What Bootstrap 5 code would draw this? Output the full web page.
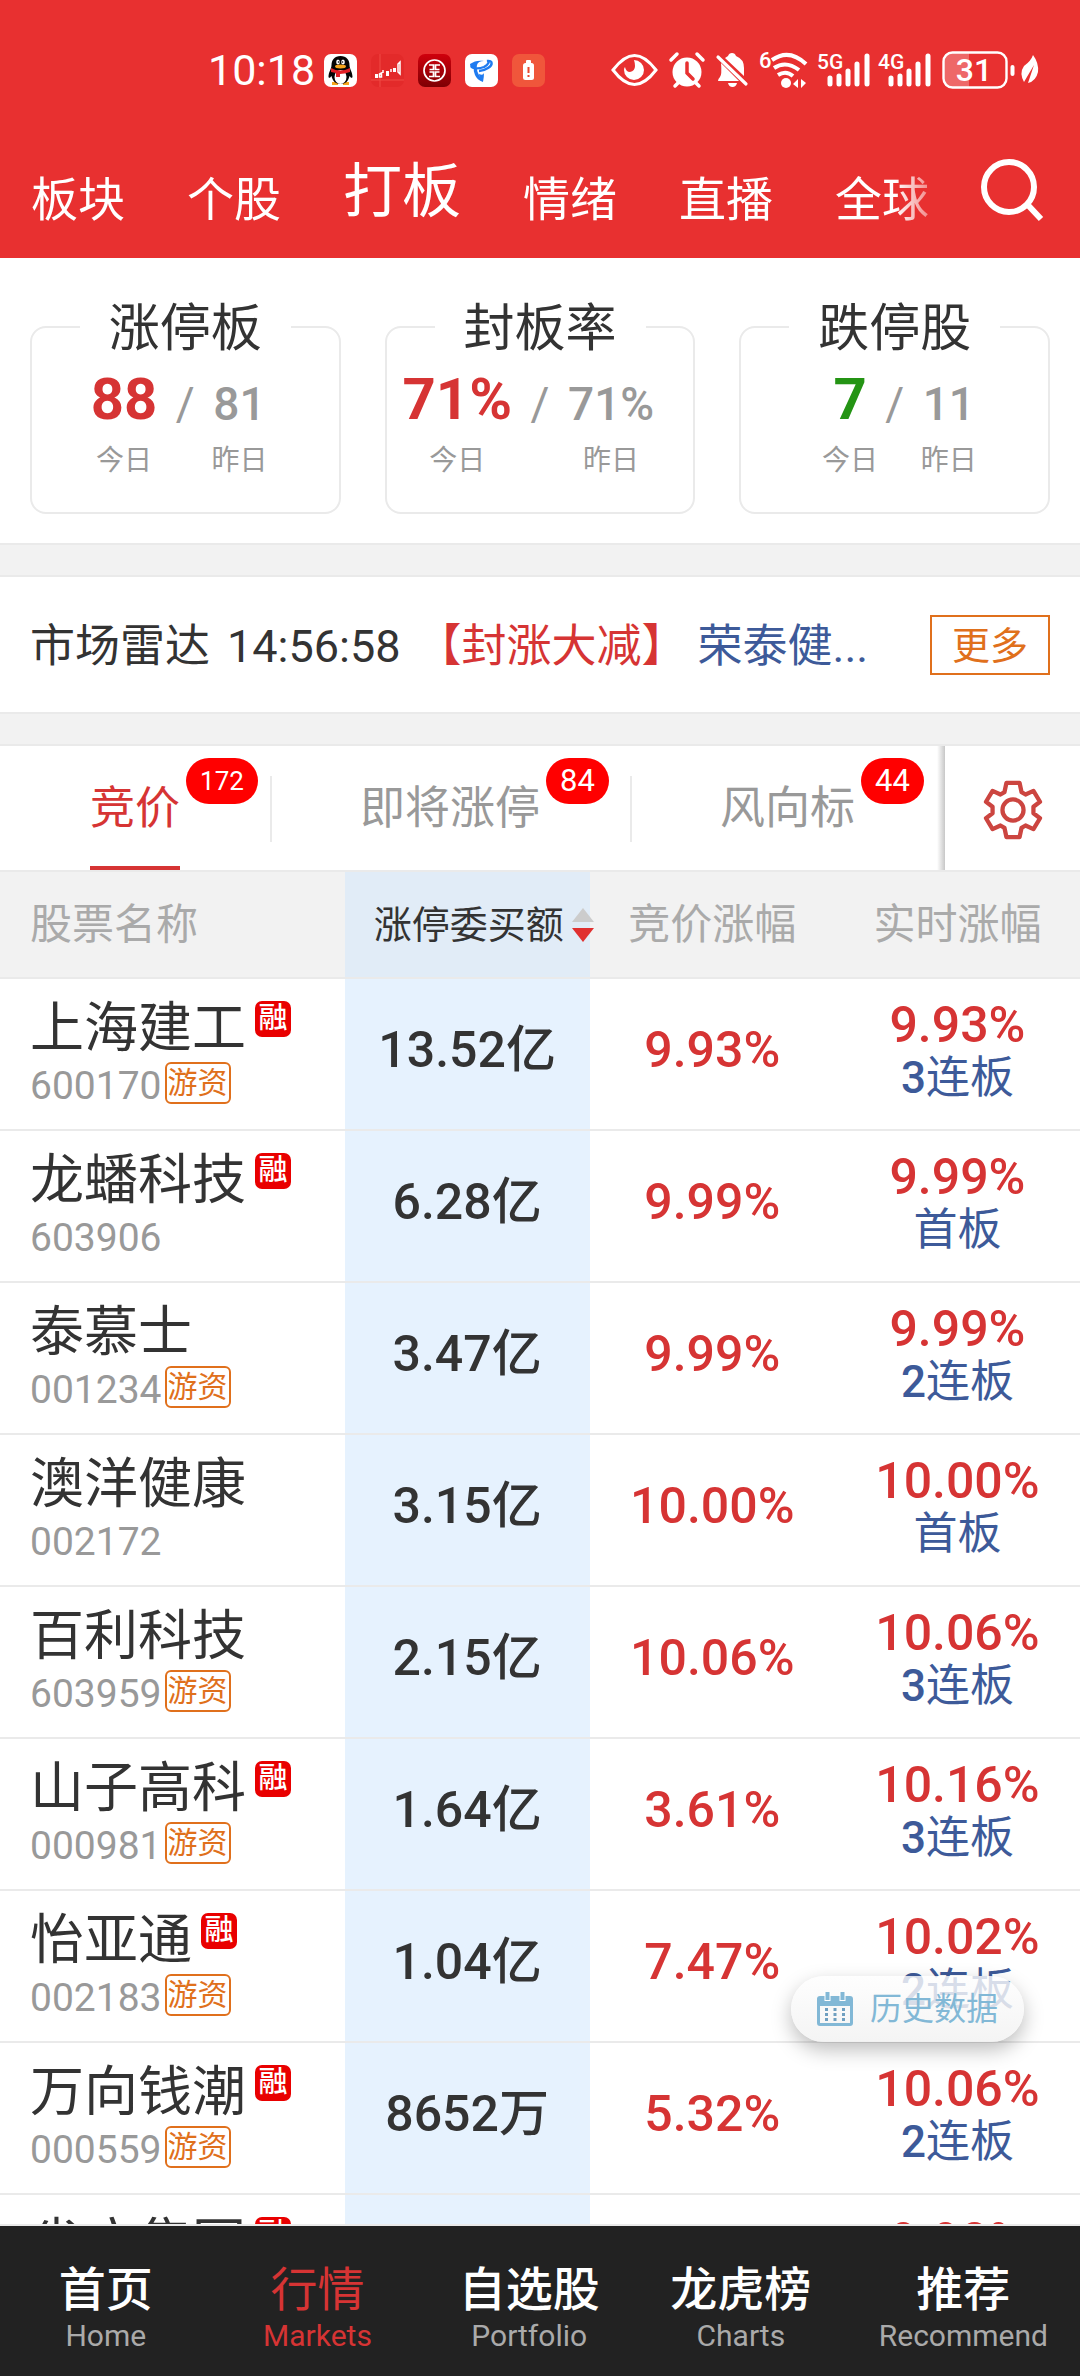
<!DOCTYPE html>
<html lang="zh-CN">
<head>
<meta charset="utf-8">
<meta name="viewport" content="width=device-width, initial-scale=1">
<title>打板</title>
<link href="https://cdn.jsdelivr.net/npm/bootstrap@5.3.0/dist/css/bootstrap.min.css" rel="stylesheet">
<style>
  :root { --app-red: #e83030; --num-red: #d63434; --ink: #333; --muted: #999; --line: #eaeaea; --band: #f2f2f2; --blue: #3d5a99; --orange: #e0701c; }
  body { font-family: Roboto, "Noto Sans CJK SC", sans-serif; color: var(--ink); background: #fff; }
  .app { height: 100vh; min-width: 1000px; }
  svg { display: block; flex: none; overflow: visible; }
  .text-rise { color: var(--num-red); }
  .text-fall { color: #249414; }

  .app-head { background: var(--app-red); color: #fff; height: 258px; }
  .status { height: 60px; margin-top: 40px; padding: 0 40px 0 208px; }
  .clock { font-size: 43px; line-height: 60px; }
  .app-icons { gap: 14px; margin-left: 9px; }
  .sys-icons { gap: 11px; }
  .leaf { margin-left: -7px; }
  .chan { gap: 62px; padding: 0 30px 30px 31px; flex: 1; }
  .chan-fade { -webkit-mask-image: linear-gradient(to right, #000 895px, transparent 955px); mask-image: linear-gradient(to right, #000 895px, transparent 955px); }
  .chan a { color: #fff; text-decoration: none; font-size: 47px; line-height: 56px; white-space: nowrap; }
  .chan a.active { font-size: 59px; line-height: 72px; }
  .plain-btn { border: 0; background: none; padding: 0; color: inherit; }
  .search-btn { padding: 0 36px 36px 0; }

  .stats { padding: 68px 30px 29px; gap: 44px; }
  .stat { flex: 1 1 0; min-width: 0; border: 2px solid var(--line); border-radius: 16px; height: 188px; }
  .stat h2 { font-size: 51px; line-height: 60px; margin: -29px 0 0; padding: 0 29px; background: #fff; font-weight: 400; }
  .stat-nums { width: 100%; margin-top: 8px; }
  .half { flex: 1 1 0; min-width: 0; }
  .num-col { text-align: center; }
  .now { font-size: 58px; line-height: 64px; font-weight: 700; }
  .prev { font-size: 46px; line-height: 64px; font-weight: 500; color: var(--muted); padding-top: 5px; height: 64px; }
  .slash { width: 56px; text-align: center; font-weight: 400; }
  .day { font-size: 28px; line-height: 36px; color: var(--muted); margin: 12px -12px 0; white-space: nowrap; }

  .band { height: 34px; background: var(--band); border-top: 2px solid var(--line); border-bottom: 2px solid var(--line); }
  .radar { height: 135px; padding: 0 30px; font-size: 45px; line-height: 56px; white-space: nowrap; }
  .radar span, .radar time { padding-top: 4px; }
  .radar time { margin-left: 17px; }
  .radar .alert-type { margin-left: 16px; }
  .radar .stock { color: var(--blue); margin-left: 11px; }
  .more-btn { border: 2px solid var(--orange); color: var(--orange); background: #fff; width: 120px; height: 60px; font-size: 38px; line-height: 50px; padding: 2px 0 0; }

  .subtabs { height: 126px; border-bottom: 2px solid var(--line); }
  .subtab { padding: 0 90px; color: var(--muted); font-size: 45px; line-height: 118px; text-decoration: none; white-space: nowrap; position: relative; }
  .subtab + .subtab::before { content: ""; position: absolute; left: 0; top: 30px; height: 66px; width: 2px; background: var(--line); }
  .subtab > span { display: block; height: 124px; padding-top: 4px; border-bottom: 4px solid transparent; position: relative; }
  .subtab.active > span { color: var(--num-red); border-color: var(--num-red); }
  .pill { position: absolute; left: 100%; top: 12px; margin-left: 6px; height: 46px; border-radius: 23px; padding: 0 14px; background: #f00; color: #fff; font-size: 31px; line-height: 46px; font-style: normal; }
  .pill.pill-sm { font-size: 26px; }
  .gear-btn { flex: 1; position: relative; padding-top: 4px; display: flex; align-items: center; justify-content: center; }
  .gear-btn::before { content: ""; position: absolute; left: -8px; top: 0; bottom: 0; width: 8px; background: linear-gradient(to right, rgba(0,0,0,0), rgba(0,0,0,.22)); }

  .quotes { table-layout: fixed; width: 100%; border-collapse: separate; border-spacing: 0; }
  .quotes th { height: 107px; background: var(--band); border-bottom: 2px solid var(--line); font-weight: 400; color: #aaa; font-size: 42px; line-height: 50px; padding: 0; text-align: center; vertical-align: middle; white-space: nowrap; }
  .quotes td { height: 152px; border-bottom: 2px solid var(--line); padding: 0; text-align: center; font-size: 50px; line-height: 50px; font-weight: 500; vertical-align: middle; white-space: nowrap; }
  .quotes .c-name { text-align: left; padding-left: 30px; }
  .quotes th.c-amt { background: #e1ecf7; color: var(--ink); font-size: 38px; }
  .quotes td.c-amt { background: #e6f2fe; padding-bottom: 8px; }
  .quotes td.c-bid { color: var(--num-red); padding-bottom: 8px; }
  .quotes td.c-now { color: var(--num-red); vertical-align: top; padding-top: 21px; }
  .quotes td.c-name { vertical-align: top; padding-top: 20px; font-weight: 400; }
  .sort-mark { margin: 0 -4px 0 8px; position: relative; }
  .sname { font-size: 54px; line-height: 60px; gap: 9px; }
  .margin-tag { width: 36px; height: 36px; border-radius: 7px; background: #e90000; color: #fff; font-size: 29px; line-height: 34px; text-align: center; margin-top: 2px; font-weight: 500; }
  .scode { font-size: 39px; line-height: 44px; color: var(--muted); margin-top: 5px; gap: 3px; }
  .hot-tag { border: 2px solid var(--orange); border-radius: 6px; color: var(--orange); font-size: 30px; line-height: 38px; padding: 0 1px; height: 42px; margin-top: -2px; }
  .boards { font-size: 44px; line-height: 50px; color: var(--blue); margin-top: 3px; font-weight: 400; }
  .boards b { font-weight: 500; }
  .list-wrap { min-height: 0; }

  .history { position: absolute; right: 56px; bottom: 334px; width: 233px; height: 66px; border: 0; border-radius: 33px; gap: 17px; font-size: 32px; line-height: 40px; color: #82b8d6; background: linear-gradient(rgba(254,254,254,.8), rgba(242,242,242,.86)); box-shadow: 0 8px 20px rgba(0,0,0,.26); }
  .foot { height: 152px; background: #222; border-top: 2px solid var(--line); }
  .foot a { flex: 0 0 19.6%; padding-top: 38px; text-align: center; color: #fff; text-decoration: none; font-size: 47px; line-height: 52px; font-weight: 500; }
  .foot a:last-child { flex: 1; }
  .foot span { display: block; font-size: 30px; line-height: 40px; color: #aaa; font-weight: 400; }
  .foot a.active { font-weight: 400; }
  .foot a.active, .foot a.active span { color: var(--num-red); }
</style>
</head>
<body>
<div class="app d-flex flex-column position-relative overflow-hidden">

  <header class="app-head d-flex flex-column flex-shrink-0">
    <div class="status d-flex align-items-center">
      <span class="clock">10:18</span>
      <div class="app-icons d-flex align-items-center">
        <svg width="33" height="33" viewBox="0 0 33 33"><rect width="33" height="33" rx="7" fill="#fff"/><path d="M8 28h6v3H8zM19 28h6v3h-6z" fill="#f5a51b"/><path d="M16.500 2c-6 0-9 4-9 9 0 4-3 7-3 12 1 2 2 0 3-1 1 5 4 8 9 8s8-3 9-8c1 1 2 3 3 1 0-5-3-8-3-12 0-5-3-9-9-9z" fill="#050505"/><ellipse cx="16.500" cy="23" rx="6" ry="7" fill="#fff"/><path d="M7 14q9 5 19 0v4q-6 2-10 2v3h-4v-4l-5-1z" fill="#e31f26"/><ellipse cx="14" cy="8" rx="1.800" ry="2.600" fill="#fff"/><ellipse cx="19" cy="8" rx="1.800" ry="2.600" fill="#fff"/><ellipse cx="16.500" cy="12.500" rx="5.500" ry="1.900" fill="#f5a51b"/><circle cx="14.500" cy="8" r=".8"/><circle cx="18.500" cy="8" r=".8"/></svg>
        <svg width="33" height="33" viewBox="0 0 33 33"><rect width="33" height="33" rx="7" fill="#e32a2a"/><path d="M9 0v33M0 26h33" stroke="#f04a44" stroke-width="1"/><g fill="#fff"><path d="M4 20h3v4H4zM15 17h3v5h-3zM22 14h3v4h-3z"/></g><g fill="none" stroke="#fff" stroke-width="1.500"><path d="M8.500 20v3h2v-4zM12 16v3M20 15v3M27 10l2-2v12l-2-2z"/></g></svg>
        <svg width="33" height="33" viewBox="0 0 33 33"><defs><linearGradient id="ic" x2="0" y2="1"><stop stop-color="#d0000c"/><stop offset="1" stop-color="#7d0004"/></linearGradient></defs><rect width="33" height="33" rx="7" fill="url(#ic)"/><circle cx="16.500" cy="16.500" r="10.500" fill="none" stroke="#fff" stroke-width="1.700"/><path d="M11 11h4.500v4.500h-4M22 11h-4.500v4.500h4M11.500 18h4v4.500h-4.500M21.500 18h-4v4.500h4.500" fill="none" stroke="#fff" stroke-width="1.700"/></svg>
        <svg width="33" height="33" viewBox="0 0 33 33"><rect width="33" height="33" rx="7" fill="#fff"/><path d="M5 10c4-3 9-4 14-3q-6 0-7 4-2 5 6 17-6-2-8-7-2-4-1-7-4 0-4-4z" fill="#1e7bf0"/><path d="M6 12c2 3 8 3 13 1 5-3 6-6 3-6 6-1 6 4 1 7-3 2-7 3-9 3" fill="none" stroke="#1e7bf0" stroke-width="2.400"/><path d="M14 20q4 2 5-1 0 4-1 9-4-3-4-8z" fill="#1e7bf0"/></svg>
        <svg width="33" height="33" viewBox="0 0 33 33"><rect width="33" height="33" rx="7" fill="#f0563b"/><rect x="11" y="9" width="11" height="17" rx="2.500" fill="#fff"/><rect x="14" y="6" width="5" height="4" rx="1" fill="#fff"/><path d="M15.500 13h2v6h-2zM15.500 21h2v2h-2z" fill="#e8492f"/></svg>
      </div>
      <div class="sys-icons d-flex align-items-center ms-auto">
        <svg width="47" height="34" viewBox="0 0 47 34"><path d="M2 17Q13 2.500 23.500 2.500T45 17Q34 31.500 23.500 31.500T2 17z" fill="none" stroke="#fff" stroke-width="3"/><path d="M23 7a10 10 0 1 1-10 10q0-2 1-3 1 5 5 5 5-1 5-6 0-3-1-6z" fill="#fff"/></svg>
        <svg width="36" height="36" viewBox="0 0 36 36"><circle cx="18" cy="20" r="14.500" fill="#fff"/><path d="M2 8l6-6M34 8l-6-6M6 34l4-4M30 34l-4-4" stroke="#fff" stroke-width="3.500" stroke-linecap="round"/><path d="M18 11v10l6 6" fill="none" stroke="#e83030" stroke-width="3.500" stroke-linecap="round"/></svg>
        <svg width="32" height="36" viewBox="0 0 32 36"><path d="M12 4q1-3 4-3t4 3q8 3 8 12v8L9 6zM5 11l18 18H2q0-2 2-4 2-2 1-14zM12 31h9q-1 4-4.500 4T12 31z" fill="#fff"/><path d="M2 5l28 27" stroke="#fff" stroke-width="3.200" stroke-linecap="round"/></svg>
        <svg width="50" height="38" viewBox="0 0 50 38"><text x="0" y="17" font-size="22" font-weight="500" fill="#fff">6</text><g fill="none" stroke="#fff" stroke-width="4"><path d="M13 9q17-12 34 4M15 17q12-8 25 2M19 24q8-5 15 1"/></g><circle cx="27" cy="32" r="5" fill="#fff"/><path d="M39 28v9l-5-4zM42 28v9l5-5z" fill="#fff"/></svg>
        <svg width="50" height="36" viewBox="0 0 50 36"><text x="-3" y="17" font-size="21" font-weight="500" fill="#fff">5G</text><path d="M10 26v6M19 24v8M28 19v13M37 12v20M47 4v28" stroke="#fff" stroke-width="5" stroke-linecap="round"/></svg>
        <svg width="50" height="36" viewBox="0 0 50 36"><text x="-3" y="17" font-size="21" font-weight="500" fill="#fff">4G</text><path d="M10 26v6M19 24v8M28 19v13M37 12v20M47 4v28" stroke="#fff" stroke-width="5" stroke-linecap="round"/></svg>
        <svg width="74" height="38" viewBox="0 0 74 38"><path d="M10 1h17v36H10q-9 0-9-9V10q0-9 9-9z" fill="#ee6868"/><rect x="1.500" y="1.500" width="63" height="35" rx="9" fill="none" stroke="#fff" stroke-width="2.400"/><path d="M70.500 16v7" stroke="#fff" stroke-width="4" stroke-linecap="round"/><text x="32" y="30" text-anchor="middle" font-size="32" font-weight="500" fill="#fff">31</text></svg>
        <svg class="leaf" width="20" height="30" viewBox="0 0 20 30"><path d="M13 0q6 8 5 17-2 9-10 11l6-18L4 27Q-1 18 4 11 11 6 13 0z" fill="#fff"/></svg>
      </div>
    </div>
    <div class="d-flex align-items-end flex-grow-1">
      <nav class="chan chan-fade d-flex align-items-end">
        <a href="#">板块</a><a href="#">个股</a><a href="#" class="active">打板</a><a href="#">情绪</a><a href="#">直播</a><a href="#">全球</a>
      </nav>
      <button type="button" class="plain-btn search-btn" aria-label="搜索">
        <svg width="64" height="64" viewBox="0 0 64 64" fill="none" stroke="#fff"><circle cx="29" cy="29" r="25" stroke-width="6"/><path d="M46 45l15 16" stroke-width="6"/></svg>
      </button>
    </div>
  </header>

  <section class="stats d-flex flex-shrink-0">
    <div class="stat d-flex flex-column align-items-center">
      <h2>涨停板</h2>
      <div class="stat-nums d-flex">
        <div class="half d-flex justify-content-end"><div class="num-col"><div class="now text-rise">88</div><div class="day">今日</div></div></div>
        <div class="prev slash">/</div>
        <div class="half d-flex"><div class="num-col"><div class="prev">81</div><div class="day">昨日</div></div></div>
      </div>
    </div>
    <div class="stat d-flex flex-column align-items-center">
      <h2>封板率</h2>
      <div class="stat-nums d-flex">
        <div class="half d-flex justify-content-end"><div class="num-col"><div class="now text-rise">71%</div><div class="day">今日</div></div></div>
        <div class="prev slash">/</div>
        <div class="half d-flex"><div class="num-col"><div class="prev">71%</div><div class="day">昨日</div></div></div>
      </div>
    </div>
    <div class="stat d-flex flex-column align-items-center">
      <h2>跌停股</h2>
      <div class="stat-nums d-flex">
        <div class="half d-flex justify-content-end"><div class="num-col"><div class="now text-fall">7</div><div class="day">今日</div></div></div>
        <div class="prev slash">/</div>
        <div class="half d-flex"><div class="num-col"><div class="prev">11</div><div class="day">昨日</div></div></div>
      </div>
    </div>
  </section>

  <div class="band flex-shrink-0"></div>
  <section class="radar d-flex align-items-center flex-shrink-0">
    <span>市场雷达</span><time>14:56:58</time><span class="alert-type text-rise">【封涨大减】</span><span class="stock">荣泰健...</span>
    <button type="button" class="more-btn ms-auto">更多</button>
  </section>
  <div class="band flex-shrink-0"></div>

  <nav class="subtabs d-flex flex-shrink-0">
    <a href="#" class="subtab active"><span>竞价<i class="pill pill-sm">172</i></span></a>
    <a href="#" class="subtab"><span>即将涨停<i class="pill">84</i></span></a>
    <a href="#" class="subtab"><span>风向标<i class="pill">44</i></span></a>
    <button type="button" class="plain-btn gear-btn" aria-label="设置">
      <svg width="58" height="58" viewBox="-88 -88 176 176" fill="none" stroke="#cc4540" stroke-width="13" stroke-linejoin="round"><path d="M-20-82H20L26-54 38-47 62-58 82-25 62-10V10L82 25 62 58 38 47 26 54 20 82H-20L-26 54-38 47-62 58-82 25-62 10V-10L-82-25-62-58-38-47-26-54z"/><circle r="32"/></svg>
    </button>
  </nav>

  <main class="list-wrap flex-grow-1 overflow-hidden">
    <table class="quotes">
      <colgroup><col><col style="width:22.7%"><col style="width:22.7%"><col style="width:22.7%"></colgroup>
      <thead>
        <tr>
          <th class="c-name">股票名称</th>
          <th class="c-amt"><div class="d-flex align-items-center justify-content-end">涨停委买额<svg class="sort-mark" width="22" height="34" viewBox="0 0 22 34"><path d="M11 0l11 14H0z" fill="#ccc"/><path d="M11 34L0 20h22z" fill="#e03030"/></svg></div></th>
          <th>竞价涨幅</th>
          <th>实时涨幅</th>
        </tr>
      </thead>
      <tbody>
        <tr><td class="c-name"><div class="sname d-flex">上海建工<span class="margin-tag">融</span></div><div class="scode d-flex">600170<span class="hot-tag">游资</span></div></td><td class="c-amt">13.52亿</td><td class="c-bid">9.93%</td><td class="c-now">9.93%<div class="boards"><b>3</b>连板</div></td></tr>
        <tr><td class="c-name"><div class="sname d-flex">龙蟠科技<span class="margin-tag">融</span></div><div class="scode d-flex">603906</div></td><td class="c-amt">6.28亿</td><td class="c-bid">9.99%</td><td class="c-now">9.99%<div class="boards">首板</div></td></tr>
        <tr><td class="c-name"><div class="sname d-flex">泰慕士</div><div class="scode d-flex">001234<span class="hot-tag">游资</span></div></td><td class="c-amt">3.47亿</td><td class="c-bid">9.99%</td><td class="c-now">9.99%<div class="boards"><b>2</b>连板</div></td></tr>
        <tr><td class="c-name"><div class="sname d-flex">澳洋健康</div><div class="scode d-flex">002172</div></td><td class="c-amt">3.15亿</td><td class="c-bid">10.00%</td><td class="c-now">10.00%<div class="boards">首板</div></td></tr>
        <tr><td class="c-name"><div class="sname d-flex">百利科技</div><div class="scode d-flex">603959<span class="hot-tag">游资</span></div></td><td class="c-amt">2.15亿</td><td class="c-bid">10.06%</td><td class="c-now">10.06%<div class="boards"><b>3</b>连板</div></td></tr>
        <tr><td class="c-name"><div class="sname d-flex">山子高科<span class="margin-tag">融</span></div><div class="scode d-flex">000981<span class="hot-tag">游资</span></div></td><td class="c-amt">1.64亿</td><td class="c-bid">3.61%</td><td class="c-now">10.16%<div class="boards"><b>3</b>连板</div></td></tr>
        <tr><td class="c-name"><div class="sname d-flex">怡亚通<span class="margin-tag">融</span></div><div class="scode d-flex">002183<span class="hot-tag">游资</span></div></td><td class="c-amt">1.04亿</td><td class="c-bid">7.47%</td><td class="c-now">10.02%<div class="boards"><b>2</b>连板</div></td></tr>
        <tr><td class="c-name"><div class="sname d-flex">万向钱潮<span class="margin-tag">融</span></div><div class="scode d-flex">000559<span class="hot-tag">游资</span></div></td><td class="c-amt">8652万</td><td class="c-bid">5.32%</td><td class="c-now">10.06%<div class="boards"><b>2</b>连板</div></td></tr>
        <tr><td class="c-name"><div class="sname d-flex">省广集团<span class="margin-tag">融</span></div></td><td class="c-amt"></td><td class="c-bid"></td><td class="c-now">9.98%</td></tr>
      </tbody>
    </table>
  </main>

  <button type="button" class="history d-flex align-items-center justify-content-center">
    <svg width="36" height="34" viewBox="0 0 36 34"><path d="M3 4h30q3 0 3 3v24q0 3-3 3H3q-3 0-3-3V7q0-3 3-3zM3 14v17h30V14z" fill="#82b8d6" fill-rule="evenodd"/><path d="M10.500 0v9M25.500 0v9" stroke="#fff" stroke-width="6"/><path d="M10.500 0v8M25.500 0v8" stroke="#82b8d6" stroke-width="4"/><path d="M8 17.500h20M8 22.500h20M8 27.500h20" stroke="#6f9fc0" stroke-width="3" stroke-dasharray="3 5.500"/></svg>历史数据
  </button>

  <nav class="foot d-flex flex-shrink-0">
    <a href="#">首页<span>Home</span></a>
    <a href="#" class="active">行情<span>Markets</span></a>
    <a href="#">自选股<span>Portfolio</span></a>
    <a href="#">龙虎榜<span>Charts</span></a>
    <a href="#">推荐<span>Recommend</span></a>
  </nav>
</div>
<script src="https://cdn.jsdelivr.net/npm/bootstrap@5.3.0/dist/js/bootstrap.bundle.min.js"></script>
</body>
</html>
